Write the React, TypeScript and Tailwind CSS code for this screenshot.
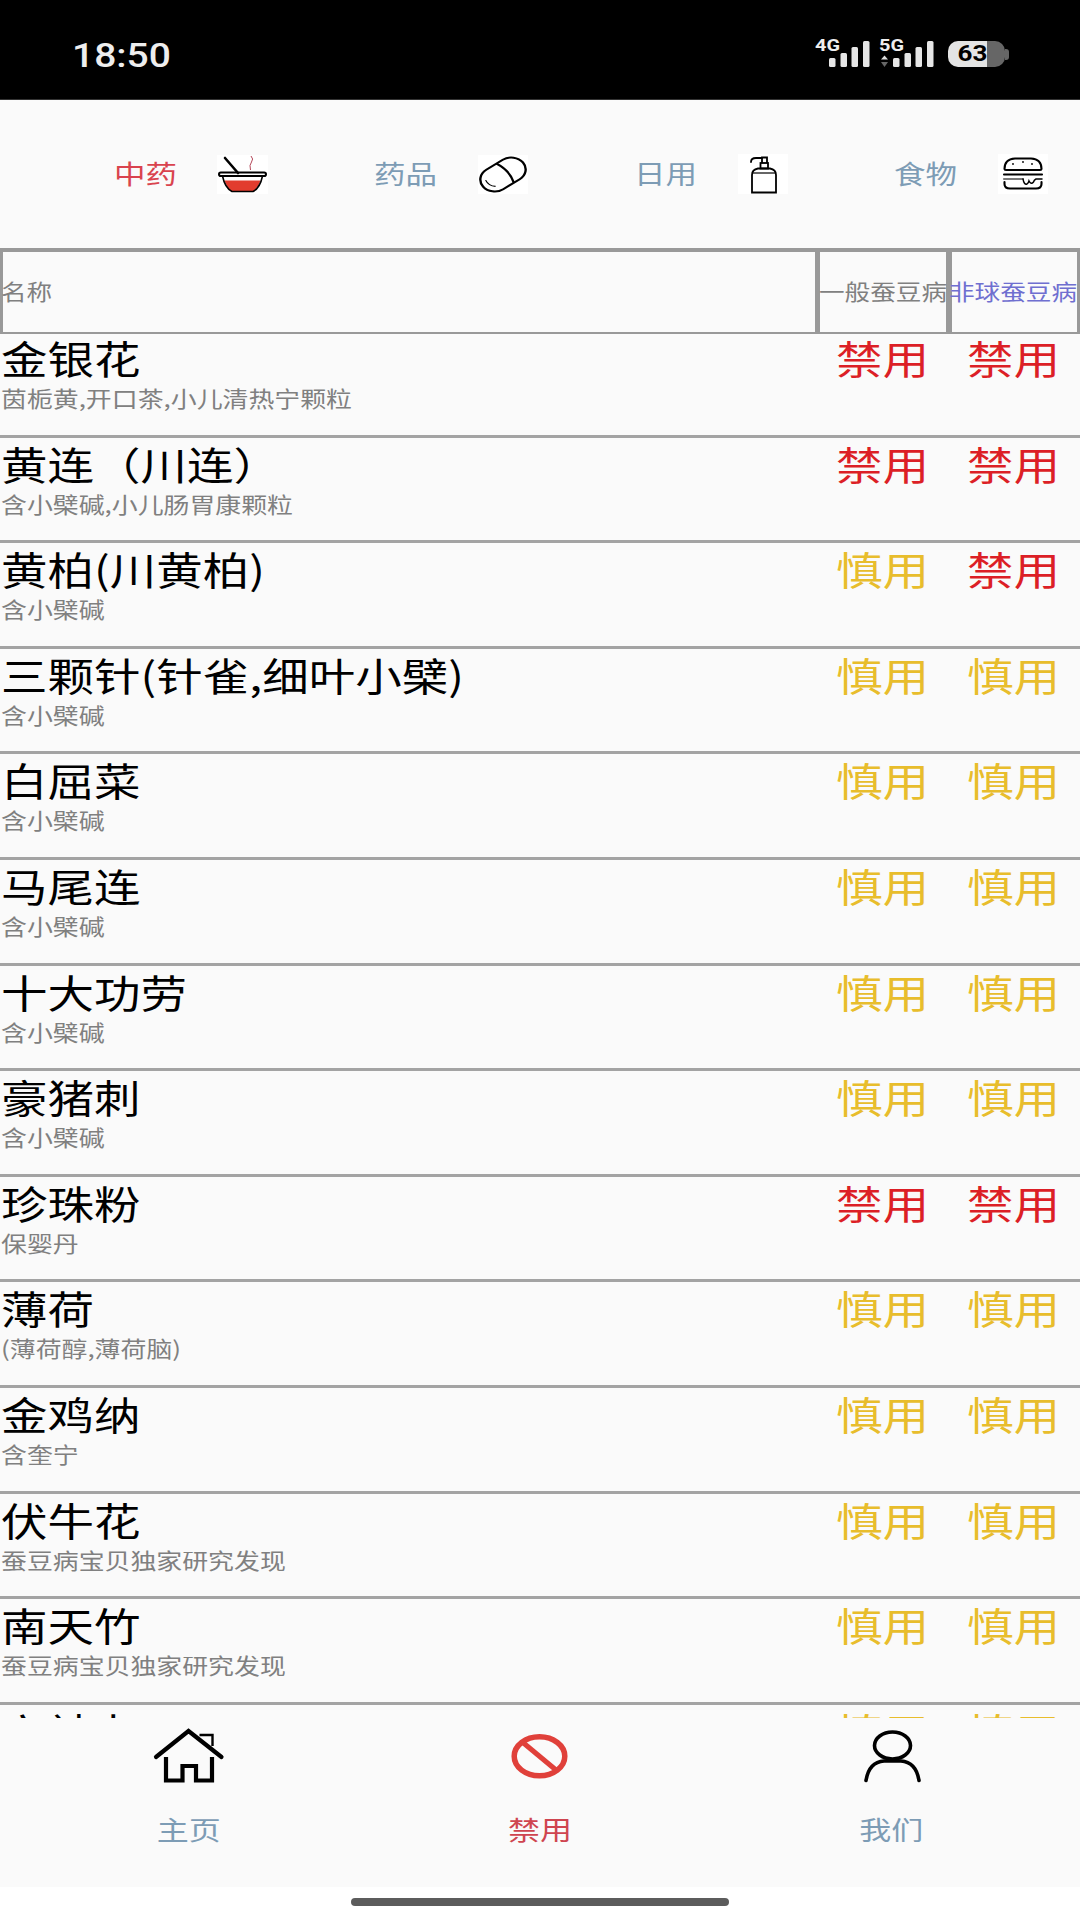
import React from "react";

type Row = { name: string; note: string; a: "禁用" | "慎用"; b: "禁用" | "慎用" };

const rows: Row[] = [
  { name: "金银花", note: "茵栀黄,开口茶,小儿清热宁颗粒", a: "禁用", b: "禁用" },
  { name: "黄连（川连）", note: "含小檗碱,小儿肠胃康颗粒", a: "禁用", b: "禁用" },
  { name: "黄柏(川黄柏)", note: "含小檗碱", a: "慎用", b: "禁用" },
  { name: "三颗针(针雀,细叶小檗)", note: "含小檗碱", a: "慎用", b: "慎用" },
  { name: "白屈菜", note: "含小檗碱", a: "慎用", b: "慎用" },
  { name: "马尾连", note: "含小檗碱", a: "慎用", b: "慎用" },
  { name: "十大功劳", note: "含小檗碱", a: "慎用", b: "慎用" },
  { name: "豪猪刺", note: "含小檗碱", a: "慎用", b: "慎用" },
  { name: "珍珠粉", note: "保婴丹", a: "禁用", b: "禁用" },
  { name: "薄荷", note: "(薄荷醇,薄荷脑)", a: "慎用", b: "慎用" },
  { name: "金鸡纳", note: "含奎宁", a: "慎用", b: "慎用" },
  { name: "伏牛花", note: "蚕豆病宝贝独家研究发现", a: "慎用", b: "慎用" },
  { name: "南天竹", note: "蚕豆病宝贝独家研究发现", a: "慎用", b: "慎用" },
  { name: "六神丸", note: "", a: "慎用", b: "慎用" },
];

const T: React.FC<{ className?: string; children: React.ReactNode }> = ({ className, children }) => (
  <span className={`inline-block whitespace-nowrap scale-y-[0.83] ${className ?? ""}`}>{children}</span>
);

const Signal: React.FC<{ label: string; arrows?: boolean }> = ({ label, arrows }) => (
  <svg width="56" height="38" viewBox="0 -4 56 38">
    <text
      x="0"
      y="12"
      fontSize="16"
      fontWeight="700"
      fill="#eeeeee"
      fontFamily="Roboto, sans-serif"
      textLength="25"
      lengthAdjust="spacingAndGlyphs"
    >
      {label}
    </text>
    {arrows && (
      <>
        <path d="M2 20.5 L5.5 16.5 L9 20.5 Z" fill="#dddddd" />
        <path d="M2 23 L9 23 L5.5 28 Z" fill="#666666" />
      </>
    )}
    <rect x="14" y="19" width="6.5" height="9" rx="1.5" fill="#e6e6e6" />
    <rect x="25.5" y="14" width="6.5" height="14" rx="1.5" fill="#e6e6e6" />
    <rect x="36.5" y="8" width="6.5" height="20" rx="1.5" fill="#e6e6e6" />
    <rect x="48" y="2" width="6.5" height="26" rx="1.5" fill="#e6e6e6" />
  </svg>
);

const BowlIcon = () => (
  <svg width="51" height="39" viewBox="0 0 51 39" className="bg-white">
    <path d="M8 3 L21 18" stroke="#000" strokeWidth="2.6" strokeLinecap="round" />
    <path d="M34 1 Q37 4 34.5 7 Q32 10 33.5 15" stroke="#b5485a" strokeWidth="1" fill="none" />
    <path d="M15 36.5 Q10 33 7.5 25.5 H43.5 Q41 33 36 36.5 Z" fill="#e23c2e" />
    <path d="M5.5 21 Q8 33 15 36.5 H36 Q43 33 45.5 21" stroke="#000" strokeWidth="1.6" fill="none" />
    <rect x="2" y="17.5" width="47" height="3.6" rx="1.8" fill="none" stroke="#000" strokeWidth="2" />
  </svg>
);

const PillIcon = () => (
  <svg width="50" height="39" viewBox="0 0 50 39" className="bg-white">
    <g transform="translate(25 19.5) scale(1.2 1) rotate(-36)" fill="none" stroke="#000" strokeWidth="2">
      <rect x="-20.5" y="-12" width="41" height="24" rx="12" />
      <path d="M2 -12 Q7 0 2.5 12" />
      <path d="M-15 -4 Q-16.5 2 -12 6" strokeWidth="1.1" />
    </g>
  </svg>
);

const PumpIcon = () => (
  <svg width="50" height="40" viewBox="0 0 50 40" className="bg-white">
    <g fill="none" stroke="#000" strokeWidth="1.8">
      <path d="M14 38.5 V21 Q14 15.5 20 14.5 H32 Q38 15.5 38 21 V38.5 Z" />
      <path d="M14 19 H38" strokeWidth="1.2" />
      <rect x="22.5" y="9" width="7.5" height="5.5" />
      <path d="M24 9 V3.5 H29 V9" />
      <path d="M13 8 Q13 4 18 4 H24" strokeLinecap="round" />
    </g>
  </svg>
);

const BurgerIcon = () => (
  <svg width="50" height="40" viewBox="0 0 50 40" className="bg-white">
    <g fill="none" stroke="#000" strokeWidth="2.1" strokeLinecap="round">
      <path d="M6.5 15 Q6.5 5 17 4.5 H33 Q43.5 5 43.5 15 Q43.5 16 42 16 H8 Q6.5 16 6.5 15 Z" />
      <path d="M6 20.5 H44" />
      <path d="M6 25 H25" stroke="#777777" />
      <path d="M6.5 28 V30 Q6.5 34.5 12 34.5 H38 Q43.5 34.5 43.5 30 V28" />
      <path d="M25 25 Q26 31 29 30 Q30.5 29 31 27 Q33 31 35.5 28 Q36 26 38 25 H44" strokeWidth="1.5" />
    </g>
    <g fill="#000">
      <circle cx="15" cy="10" r="0.9" />
      <circle cx="25" cy="8" r="0.9" />
      <circle cx="34" cy="10" r="0.9" />
    </g>
  </svg>
);

const HomeIcon = () => (
  <svg width="76" height="60" viewBox="0 0 76 60">
    <g fill="none" stroke="#000" strokeWidth="4.2" strokeLinecap="round">
      <path d="M5 32 L37.5 6 L70.5 32" />
      <path d="M48.5 10 H61.5 V21" strokeWidth="2.4" strokeLinecap="butt" />
      <path d="M15 32 V55.5 H31.5 V41 H45 V55.5 H61 V32" strokeLinecap="butt" />
    </g>
  </svg>
);

const BanIcon = () => (
  <svg width="76" height="60" viewBox="0 0 76 60">
    <ellipse cx="37.5" cy="31.3" rx="25.3" ry="19.5" fill="none" stroke="#e0403a" strokeWidth="5.5" />
    <path d="M21.5 18 L54 45" stroke="#e0403a" strokeWidth="5" />
  </svg>
);

const UserIcon = () => (
  <svg width="76" height="60" viewBox="0 0 76 60">
    <g fill="none" stroke="#000" strokeWidth="3.6" strokeLinecap="round">
      <ellipse cx="39.5" cy="20.5" rx="18" ry="13.5" />
      <path d="M13 55.5 Q16 37 31 36 H48 Q63 37 66 55.5" />
    </g>
  </svg>
);

const tabs = [
  { label: "中药", color: "text-[#d9434e]", icon: <BowlIcon /> },
  { label: "药品", color: "text-[#7d9cb5]", icon: <PillIcon /> },
  { label: "日用", color: "text-[#7d9cb5]", icon: <PumpIcon /> },
  { label: "食物", color: "text-[#7d9cb5]", icon: <BurgerIcon /> },
];

const navItems = [
  { label: "主页", color: "text-[#7d9cb5]", icon: <HomeIcon /> },
  { label: "禁用", color: "text-[#cf4550]", icon: <BanIcon /> },
  { label: "我们", color: "text-[#7d9cb5]", icon: <UserIcon /> },
];

const Status: React.FC<{ value: string }> = ({ value }) => (
  <div className="w-[131px] flex justify-center h-[50px]">
    <T className={`text-[46.5px] leading-[50px] ${value === "禁用" ? "text-[#dc1f26]" : "text-[#e8bd2c]"}`}>{value}</T>
  </div>
);

export default function App() {
  return (
    <div className="w-[1080px] h-[1920px] flex flex-col bg-white overflow-hidden font-['Noto_Sans_CJK_SC',sans-serif]">
      <div className="h-[100px] bg-black border-b border-[#333333] flex items-center pl-[72px] pr-[71px] pt-[9px]">
        <T className="mt-[4px] text-[39px] leading-[40px] font-medium text-[#eeeeee] font-['Roboto',sans-serif]">18:50</T>
        <div className="ml-auto flex items-center">
          <Signal label="4G" />
          <div className="ml-[8px]">
            <Signal label="5G" arrows />
          </div>
          <div className="ml-[13px] flex items-center">
            <div className="relative w-[57px] h-[26px] flex rounded-[10px] overflow-hidden">
              <div className="w-[39px] bg-[#e4e4e4]" />
              <div className="flex-1 bg-[#666666]" />
              <div className="absolute inset-0 flex items-center justify-center pr-[8px]">
                <T className="text-[26px] leading-[26px] font-bold text-black font-['Roboto',sans-serif]">63</T>
              </div>
            </div>
            <div className="w-[4px] h-[11px] bg-[#666666] rounded-r-[3px]" />
          </div>
        </div>
      </div>

      <div className="h-[148px] bg-[#fafafa] flex items-center pl-[116px] gap-[108px]">
        {tabs.map((tab) => (
          <div key={tab.label} className="w-[152px] flex items-center justify-between">
            <T className={`mb-[4px] -ml-[2px] text-[31.5px] leading-[40px] ${tab.color}`}>{tab.label}</T>
            {tab.icon}
          </div>
        ))}
      </div>

      <div className="relative z-10 h-[86px] flex bg-[#fafafa] text-[#808080]">
        <div className="w-[820px] border-t-4 border-b-2 border-l-[3px] border-r-[5px] border-[#999999] flex items-center">
          <T className="mb-[2px] -ml-[2px] text-[25.6px] leading-[30px]">名称</T>
        </div>
        <div className="w-[132px] border-t-4 border-b-2 border-r-[6px] border-[#999999] flex items-center">
          <T className="mb-[2px] -ml-[1px] text-[25.6px] leading-[30px]">一般蚕豆病</T>
        </div>
        <div className="w-[128px] border-t-4 border-b-2 border-r-[3px] border-[#999999] flex items-center">
          <T className="mb-[2px] -ml-[3px] text-[25.6px] leading-[30px] text-[#6f6fd0]">非球蚕豆病</T>
        </div>
      </div>

      <div className="flex-1 min-h-0 -mt-[6px] pt-[4px] overflow-hidden bg-[#fafafa]">
        {rows.map((row) => (
          <div key={row.name} className="h-[105.6px] border-b-[3px] border-[#a3a3a3] flex pr-[1px]">
            <div className="flex-1 min-w-0 pl-[1px]">
              <div className="h-[51px] leading-[50px]">
                <T className="text-[46.5px] leading-[50px] text-black">{row.name}</T>
              </div>
              <div className="h-[30px] leading-[30px]">
                <T className="text-[25.9px] leading-[30px] text-[#808080]">{row.note}</T>
              </div>
            </div>
            <Status value={row.a} />
            <Status value={row.b} />
          </div>
        ))}
      </div>

      <div className="h-[169px] bg-[#fafafa] grid grid-cols-3 px-[13px] pt-[7px]">
        {navItems.map((item) => (
          <div key={item.label} className="flex flex-col items-center">
            {item.icon}
            <T className={`mt-[23px] text-[32px] leading-[40px] ${item.color}`}>{item.label}</T>
          </div>
        ))}
      </div>

      <div className="h-[33px] bg-white flex justify-center pt-[11px]">
        <div className="w-[378px] h-[8px] rounded-full bg-[#5c5c5c]" />
      </div>
    </div>
  );
}
